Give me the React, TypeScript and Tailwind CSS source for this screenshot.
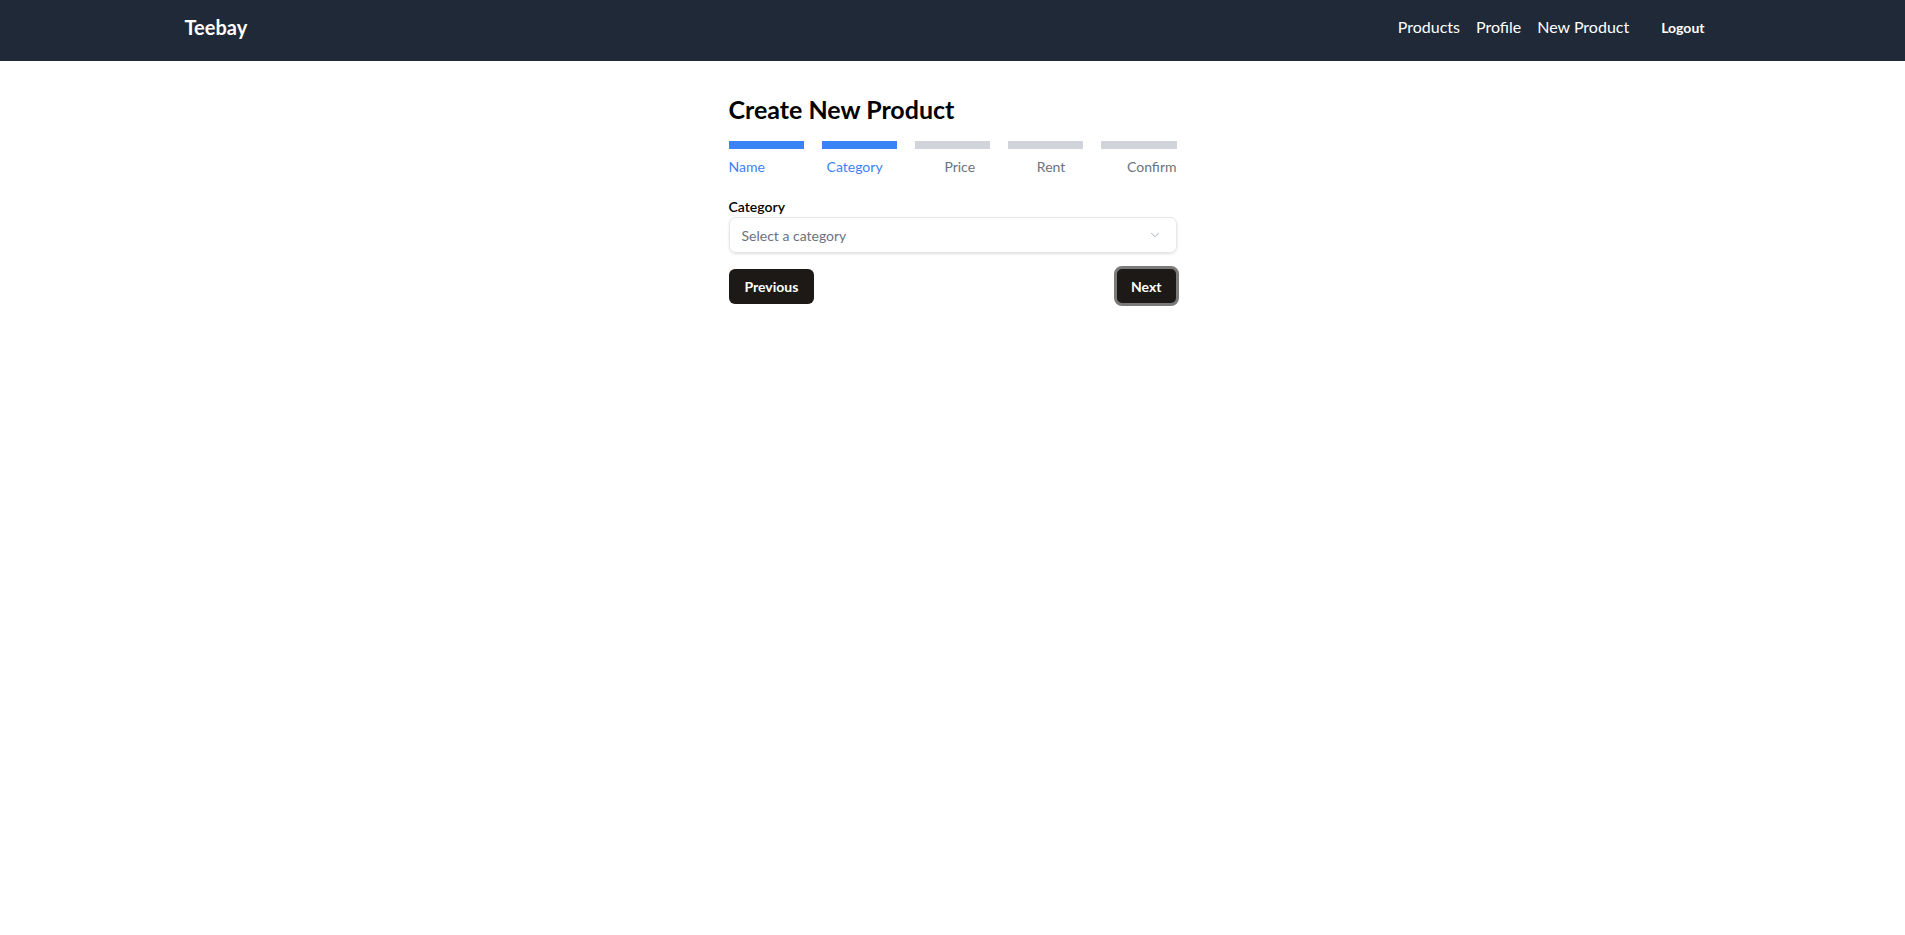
import React from "react";

const steps = ["Name", "Category", "Price", "Rent", "Confirm"];
const current = 1;

export default function App() {
  return (
    <div className="min-h-screen bg-white font-['Lato','Noto_Sans',sans-serif]">
      <nav className="bg-[#1f2937] h-[61px] pb-[7px]">
        <div className="max-w-[1536px] mx-auto h-full flex justify-between items-center">
          <span className="text-[20px] font-bold text-white">Teebay</span>
          <div className="flex items-center gap-4">
            <a className="text-white text-[16px]">Products</a>
            <a className="text-white text-[16px]">Profile</a>
            <a className="text-white text-[16px]">New Product</a>
            <button className="px-4 text-white text-[14px] font-bold">Logout</button>
          </div>
        </div>
      </nav>

      <main className="max-w-[448px] mx-auto pt-8">
        <h1 className="text-[25px] font-bold text-black leading-[32px]">Create New Product</h1>

        <div className="mt-4 flex gap-[18px]">
          {steps.map((s, i) => (
            <div
              key={s}
              className={i <= current ? "flex-1 h-2 bg-[#3b82f6]" : "flex-1 h-2 bg-[#d1d5db]"}
            />
          ))}
        </div>
        <div className="mt-2 flex justify-between text-[14px] leading-5">
          {steps.map((s, i) => (
            <span key={s} className={i <= current ? "text-[#3b82f6]" : "text-[#6b7280]"}>
              {s}
            </span>
          ))}
        </div>

        <div className="mt-5">
          <label className="block text-[14px] font-semibold text-black leading-5">Category</label>
          <div className="h-[36px] w-full rounded-[7px] border border-[#e5e7eb] shadow-sm flex items-center justify-between px-[12px]">
            <span className="text-[14px] text-[#6b7280]">Select a category</span>
            <svg width="14" height="14" viewBox="0 0 24 24" fill="none" stroke="#9ca3af" strokeWidth="1.5" strokeLinecap="round" strokeLinejoin="round" className="mr-[2px]">
              <path d="m6 9 6 6 6-6" />
            </svg>
          </div>
        </div>

        <div className="mt-[13px] flex justify-between items-center">
          <button className="h-[35px] px-[16px] rounded-md bg-[#1c1917] text-white text-[14px] font-bold">
            Previous
          </button>
          <button className="h-[40px] px-[14px] rounded-lg bg-[#1c1917] text-white text-[14px] font-bold border-[3px] border-[#7a7a7a] -mr-[2px]">
            Next
          </button>
        </div>
      </main>
    </div>
  );
}
